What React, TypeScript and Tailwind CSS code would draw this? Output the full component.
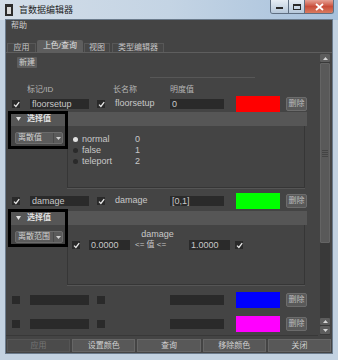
import React from "react";

function Check({ on = true }: { on?: boolean }) {
  return (
    <span className="flex h-[8px] w-[8px] shrink-0 items-center justify-center bg-[#2a2a2a]">
      {on && (
        <svg width="7" height="7" viewBox="0 0 7 7">
          <path d="M1 3.6 2.9 5.5 6.2 1.2" fill="none" stroke="#e8e8e8" strokeWidth="1.3" />
        </svg>
      )}
    </span>
  );
}

function Field({ text = "", className = "" }: { text?: string; className?: string }) {
  return (
    <div className={`h-[10px] shrink-0 bg-[#2a2a2a] pl-[2px] text-[9px] leading-[10px] text-[#c8c8c8] ${className}`}>
      {text}
    </div>
  );
}

function DeleteBtn() {
  return (
    <div className="ml-[6px] flex h-[14px] w-[21px] items-center justify-center rounded-[2px] border border-[#6c6c6c] bg-[#595959] text-[8px] leading-none text-[#bdbdbd]">
      删除
    </div>
  );
}

type RowProps = { id?: string; name?: string; value?: string; color: string; on?: boolean };

function DataRow({ id, name, value, color, on = true }: RowProps) {
  return (
    <div className="flex h-[16px] items-center pl-[6px]">
      <Check on={on} />
      <Field text={id} className="ml-[10px] w-[59px]" />
      <span className="ml-[8px]">
        <Check on={on} />
      </span>
      <span className="ml-[10px] w-[55px] text-[9px] text-[#c8c8c8]">{name}</span>
      <Field text={value} className="w-[54px]" />
      <span className={`ml-[12px] h-[16px] w-[44px] ${color}`} />
      <DeleteBtn />
    </div>
  );
}

function Dropdown({ label }: { label: string }) {
  return (
    <div className="ml-[7px] mt-[6px] flex h-[12px] w-[48px] items-center rounded-[2px] border border-[#6c6c6c] bg-[#5b5b5b]">
      <span className="flex-1 pl-[2px] text-[8px] leading-none text-[#cfcfcf]">{label}</span>
      <span className="flex h-full w-[9px] items-center justify-center border-l border-[#4a4a4a]">
        <svg width="5" height="3" viewBox="0 0 5 3">
          <path d="M0 0h5L2.5 3z" fill="#d0d0d0" />
        </svg>
      </span>
    </div>
  );
}

function FrameHeader() {
  return (
    <div className="flex h-[14px] items-center bg-[#565656] pl-[8px] text-[8px] font-bold leading-none text-[#e2e2e2]">
      <svg width="5" height="4" viewBox="0 0 5 4">
        <path d="M0 0h5L2.5 4z" fill="#e2e2e2" />
      </svg>
      <span className="ml-[6px]">选择值</span>
    </div>
  );
}

const options: [string, string, boolean][] = [
  ["normal", "0", true],
  ["false", "1", false],
  ["teleport", "2", false],
];

function Arrow({ up, className = "" }: { up?: boolean; className?: string }) {
  return (
    <div className={`flex items-center justify-center rounded-[1px] bg-[#5d5d5d] ${className}`}>
      <svg width="5" height="3" viewBox="0 0 5 3">
        <path d={up ? "M0 3h5L2.5 0z" : "M0 0h5L2.5 3z"} fill="#d6d6d6" />
      </svg>
    </div>
  );
}

export default function App() {
  return (
    <div className="flex h-[360px] w-[338px] flex-col bg-[#c3d2e1] font-['Liberation_Sans','Noto_Sans_CJK_SC',sans-serif]">
      {/* title bar */}
      <div className="flex h-[20px] shrink-0 items-start bg-gradient-to-r from-[#d3dde8] via-[#c4d4e4] to-[#a7c1dc] pl-[5px]">
        <div className="mt-[4px] flex h-[12px] w-[8px] items-center justify-center bg-[#2c2c2c]">
          <div className="h-[7px] w-[4px] border-l-2 border-r-2 border-[#d8d8d8]" />
        </div>
        <span className="ml-[6px] mt-[5px] text-[9px] leading-[10px] text-[#1f1f1f]">盲数据编辑器</span>
        <div className="ml-auto mr-[4px] flex h-[14px] overflow-hidden rounded-b-[3px] border border-t-0 border-[#5f6f82]">
          <div className="flex w-[17px] items-end justify-center bg-gradient-to-b from-[#e6edf4] to-[#b6c8da] pb-[4px]">
            <div className="h-[2px] w-[7px] bg-[#2a2a2a]" />
          </div>
          <div className="flex w-[16px] items-center justify-center border-l border-[#5f6f82] bg-gradient-to-b from-[#e6edf4] to-[#b6c8da]">
            <div className="h-[6px] w-[8px] border border-t-2 border-[#2a2a2a]" />
          </div>
          <div className="flex w-[29px] items-center justify-center border-l border-[#5f6f82] bg-gradient-to-b from-[#e5a195] via-[#c84d3a] to-[#d97a5e]">
            <svg width="9" height="8" viewBox="0 0 9 8">
              <path d="M1 1l7 6M8 1L1 7" stroke="#ffffff" strokeWidth="1.8" />
            </svg>
          </div>
        </div>
      </div>

      {/* client area */}
      <div className="ml-[6px] flex h-[333px] w-[326px] flex-col bg-[#444444] text-[#c8c8c8] shadow-[0_0_0_1px_#6b7b8c]">
        <div className="h-[16px] pl-[5px] text-[8px] leading-[11px] text-[#cccccc]">帮助</div>

        {/* tabs */}
        <div className="flex h-[16px] items-end pl-[1px] text-[8px] leading-none">
          <div className="flex h-[9px] w-[29px] items-center justify-center border border-b-0 border-[#585858] bg-[#474747] text-[#c4c4c4]">
            应用
          </div>
          <div className="ml-[1px] flex h-[12px] w-[46px] items-center justify-center rounded-t-[2px] bg-[#5e5e5e] text-[#e0e0e0]">
            上色/查询
          </div>
          <div className="ml-[1px] flex h-[9px] w-[26px] items-center justify-center border border-b-0 border-[#585858] bg-[#474747] text-[#c4c4c4]">
            视图
          </div>
          <div className="ml-[2px] flex h-[9px] w-[52px] items-center justify-center border border-b-0 border-[#585858] bg-[#474747] text-[#c4c4c4]">
            类型编辑器
          </div>
        </div>

        {/* tab panel */}
        <div className="flex h-[284px] border-t border-[#5e5e5e]">
          <div className="flex flex-1 flex-col">
            <div className="ml-[11px] mt-[4px] flex h-[11px] w-[20px] items-center justify-center rounded-[1px] bg-[#5d5d5d] text-[8px] leading-none text-[#d0d0d0]">
              新建
            </div>
            <div className="ml-[144px] mt-[9px] h-px w-[105px] bg-[#575757]" />

            <div className="mt-[6px] flex h-[12px] items-center pl-[21px] text-[8px] leading-none text-[#b4b4b4]">
              <span className="w-[86px]">标记/ID</span>
              <span className="w-[57px]">长名称</span>
              <span>明度值</span>
            </div>

            <DataRow id="floorsetup" name="floorsetup" value="0" color="bg-[#ff0000]" />

            {/* frame 1 */}
            <div className="relative ml-[2px] w-[299px]">
              <FrameHeader />
              <div className="flex h-[62px]">
                <div className="w-[59px]">
                  <Dropdown label="离散值" />
                </div>
                <div className="w-[238px] border-x border-b border-[#363636] pl-[5px] pt-[8px] shadow-[0_1px_0_#555555]">
                  {options.map(([label, val, sel]) => (
                    <div key={label} className="flex h-[11px] items-center text-[9px] text-[#c8c8c8]">
                      <span className={`h-[5px] w-[5px] rounded-full ${sel ? "bg-[#e2e2e2]" : "bg-[#2a2a2a]"}`} />
                      <span className="ml-[4px] w-[53px]">{label}</span>
                      <span>{val}</span>
                    </div>
                  ))}
                </div>
              </div>
              <div className="absolute -top-[1px] left-0 h-[38px] w-[60px] border-[3px] border-black" />
            </div>

            <div className="mt-[5px]">
              <DataRow id="damage" name="damage" value="[0,1]" color="bg-[#00ff00]" />
            </div>

            {/* frame 2 */}
            <div className="relative ml-[2px] mt-[2px] w-[299px]">
              <FrameHeader />
              <div className="flex h-[60px]">
                <div className="w-[59px]">
                  <Dropdown label="离散范围" />
                </div>
                <div className="w-[238px] border-x border-b border-[#363636] pl-[4px] pt-[4px] shadow-[0_1px_0_#555555]">
                  <div className="h-[10px] w-[171px] text-center text-[9px] leading-[10px] text-[#c8c8c8]">damage</div>
                  <div className="flex h-[12px] items-center text-[9px] text-[#c8c8c8]">
                    <Check />
                    <Field text="0.0000" className="ml-[9px] w-[41px]" />
                    <span className="ml-[5px] w-[54px] text-[8px] leading-none">{"<= 值 <="}</span>
                    <Field text="1.0000" className="w-[41px]" />
                    <span className="ml-[5px]">
                      <Check />
                    </span>
                  </div>
                </div>
              </div>
              <div className="absolute -top-[2px] left-0 h-[38px] w-[60px] border-[3px] border-black" />
            </div>

            <div className="mt-[7px]">
              <DataRow color="bg-[#0000ff]" on={false} />
            </div>
            <div className="mt-[8px]">
              <DataRow color="bg-[#ff00ff]" on={false} />
            </div>
            <div className="mt-[3px] h-px bg-[#383838]" />
          </div>

          {/* scrollbar */}
          <div className="mx-[2px] my-[1px] flex w-[10px] flex-col bg-[#393939] pb-[1px]">
            <Arrow up className="h-[8px]" />
            <div className="mt-[1px] flex h-[180px] flex-col items-center justify-center gap-[1px] rounded-[1px] border border-[#646464] bg-[#595959]">
              <div className="h-px w-[6px] bg-[#444444]" />
              <div className="h-px w-[6px] bg-[#444444]" />
              <div className="h-px w-[6px] bg-[#444444]" />
              <div className="h-px w-[6px] bg-[#444444]" />
            </div>
            <div className="flex-1" />
            <Arrow up className="h-[7px]" />
            <Arrow className="mt-[1px] h-[8px]" />
          </div>
        </div>

        {/* bottom buttons */}
        <div className="mt-[3px] flex h-[13px] gap-[2px] px-[1px] text-[8px] leading-none">
          <div className="flex flex-1 items-center justify-center border border-[#555555] bg-[#4b4b4b] text-[#767676]">应用</div>
          <div className="flex flex-1 items-center justify-center border border-[#666666] bg-[#585858] text-[#d0d0d0]">设置颜色</div>
          <div className="flex flex-1 items-center justify-center border border-[#666666] bg-[#585858] text-[#d0d0d0]">查询</div>
          <div className="flex flex-1 items-center justify-center border border-[#666666] bg-[#585858] text-[#d0d0d0]">移除颜色</div>
          <div className="flex flex-1 items-center justify-center border border-[#666666] bg-[#585858] text-[#d0d0d0]">关闭</div>
        </div>
      </div>
    </div>
  );
}
